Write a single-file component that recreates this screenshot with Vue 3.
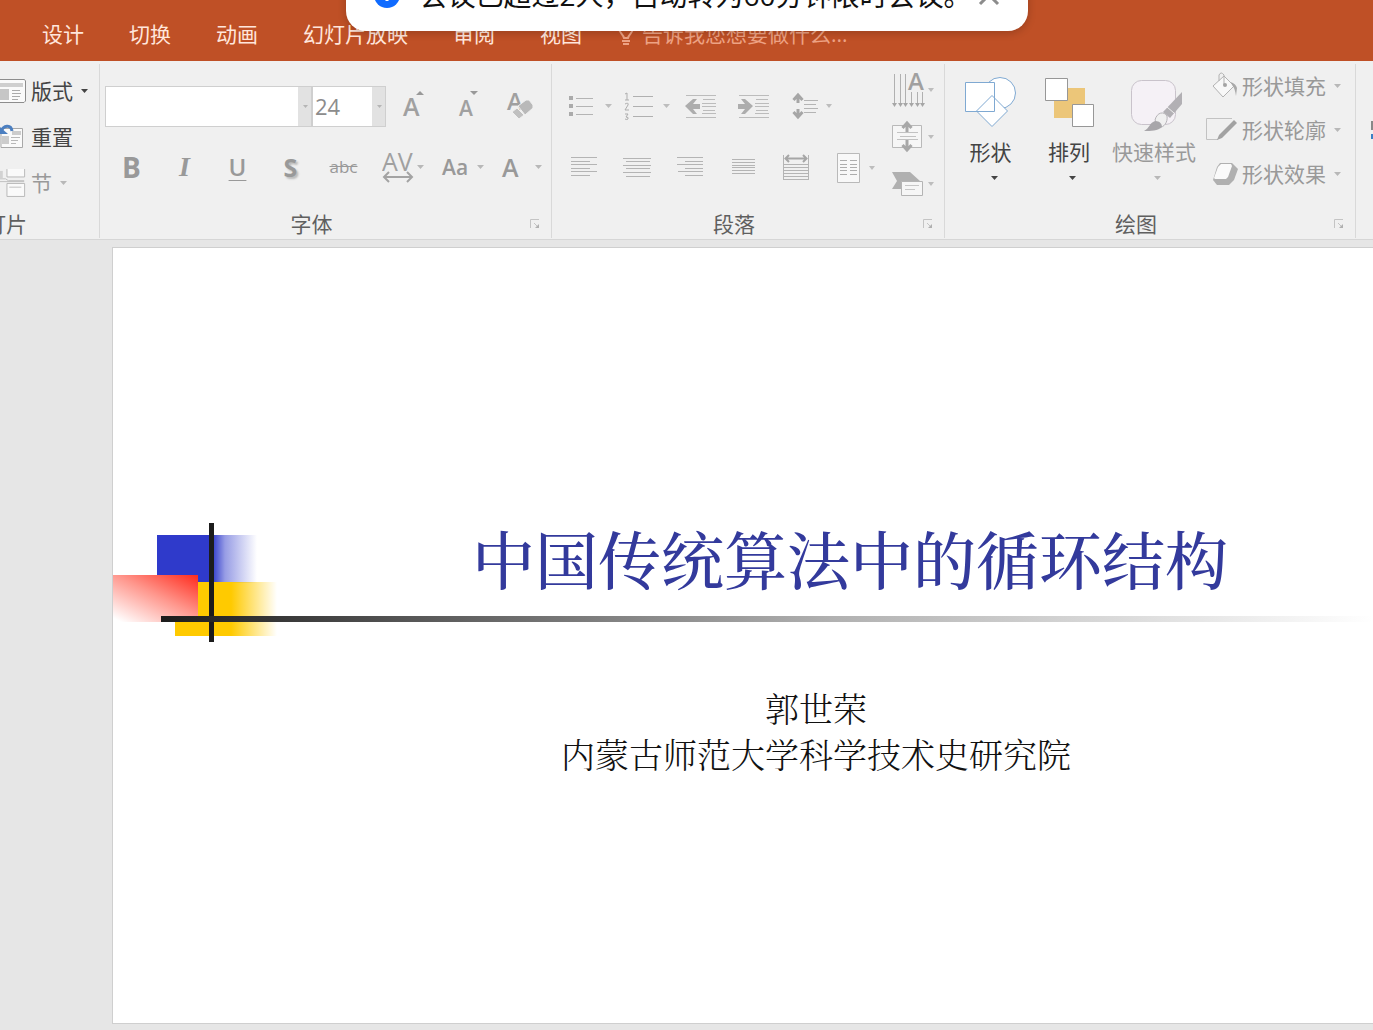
<script setup>
import { h, ref } from 'vue'

const tabs = ['设计', '切换', '动画', '幻灯片放映', '审阅', '视图']
const fontName = ref('')
const fontSize = ref('24')

const Caret = () =>
  h('svg', { class: 'caret', viewBox: '0 0 7 4', 'aria-hidden': 'true' }, [
    h('path', { d: 'M0 0h7L3.5 4z', fill: 'currentColor' })
  ])

const Launcher = () =>
  h('svg', { class: 'launcher-icon', viewBox: '0 0 10 10', 'aria-hidden': 'true' }, [
    h('path', { d: 'M.5 9V.5H9M4 4l4 4', fill: 'none', stroke: '#c4c4c4' }),
    h('path', { d: 'M9 5v4H5z', fill: '#b0b0b0' })
  ])
</script>

<template>
  <div class="app">
    <header class="tabbar">
      <nav class="tabs">
        <button v-for="t in tabs" :key="t" class="tab">{{ t }}</button>
      </nav>
      <button class="tell">
        <svg width="18" height="26" viewBox="0 0 18 26" fill="none" stroke="currentColor" stroke-width="2">
          <path d="M2 7a7 6 0 0 1 14 0c0 5-4 6-5 10H7C6 13 2 12 2 7z" />
          <path d="M5 20h8M6 23h6" />
        </svg>
        <span>告诉我您想要做什么...</span>
      </button>
    </header>

    <div class="toast" role="status">
      <svg width="26" height="26" viewBox="0 0 26 26">
        <circle cx="13" cy="13" r="13" fill="#0f6bff" />
        <path d="M13 5v3M13 11v8" stroke="#fff" stroke-width="3" />
      </svg>
      <span class="toast-text">会议已超过2人，自动转为60分钟限时会议。</span>
      <button class="close" aria-label="关闭">
        <svg width="24" height="24" viewBox="0 0 24 24"><path d="M3 3l18 18M21 3L3 21" stroke="#8c8c8c" stroke-width="3" /></svg>
      </button>
    </div>

    <section class="ribbon">
      <div class="group slides">
        <div class="body stack">
          <button class="item dark">
            <svg width="26" height="26" viewBox="0 0 26 26">
              <path d="M-6 1.500H24.500L25.500 3V23L24 24.500H-6z" fill="#fafafa" stroke="#8d8d8d" />
              <path d="M-1 5h24v4H-1z" fill="#cfcfcf" />
              <path d="M-1 11H9v11H-1z" fill="#c6c6c6" />
              <path d="M12 12.500h8M12 15.500h9M12 18.500h8M12 21.500h6" stroke="#ababab" />
            </svg>
            <span>版式</span><Caret />
          </button>
          <button class="item dark">
            <svg width="26" height="26" viewBox="0 0 26 26">
              <path d="M1 4.500H22.500V23.500H1z" fill="#fafafa" stroke="#a8a8a8" />
              <path d="M12 7h9v4h-9zM2 12h7v8H2z" fill="#cccccc" />
              <path d="M11 13.500h9M11 16.500h7M11 19.500h5" stroke="#b8b8b8" />
              <path d="M1 8C3 1 11 0 12 7" fill="none" stroke="#4c7fc0" stroke-width="3" />
              <path d="M0 3v7h8z" fill="#4c7fc0" />
            </svg>
            <span>重置</span>
          </button>
          <button class="item dim">
            <svg width="28" height="32" viewBox="0 0 28 32">
              <path d="M7.500 1V9.500H26.500V1M7.500 16.500H26.500V30.500H7.500z" fill="#fafafa" stroke="#b5b5b5" />
              <path d="M0 11.500H6L9 13.500H26M0 14.500H26M10 20.500H23" fill="none" stroke="#bdbdbd" />
              <path d="M0 3h3v8H0z" fill="#d2d2d2" />
            </svg>
            <span>节</span><Caret />
          </button>
        </div>
        <footer class="foot"><span>幻灯片</span></footer>
      </div>

      <div class="group font">
        <div class="body rows">
          <div class="row">
            <div class="combo name">
              <select v-model="fontName" aria-label="字体"><option value=""></option></select><Caret />
            </div>
            <div class="combo size">
              <select v-model="fontSize" aria-label="字号"><option>24</option></select><Caret />
            </div>
            <button class="tool" aria-label="增大字号">
              <svg width="32" height="32" viewBox="0 0 32 32">
                <text x="5" y="26" font-size="25" font-weight="600">A</text>
                <path d="M18 5l4-4 4 4z" fill="#999" />
              </svg>
            </button>
            <button class="tool" aria-label="减小字号">
              <svg width="32" height="32" viewBox="0 0 32 32">
                <text x="8" y="26" font-size="21" font-weight="600">A</text>
                <path d="M19 1h8l-4 4z" fill="#999" />
              </svg>
            </button>
            <button class="tool" aria-label="清除格式">
              <svg width="32" height="32" viewBox="0 0 32 32">
                <text x="3" y="20" font-size="24" font-weight="600">A</text>
                <path d="M14 16l8-6h3l4 5v3l-8 7z" fill="#b9b9b9" stroke="#f0f0f0" stroke-width="1" />
                <path d="M13 18l7 7-5 4-7-7z" fill="#c0c0c0" stroke="#f0f0f0" stroke-width="1" />
              </svg>
            </button>
          </div>
          <div class="row marks">
            <button class="tool bold">B</button>
            <button class="tool italic">I</button>
            <button class="tool under">U</button>
            <button class="tool shadow">S</button>
            <button class="tool strike">abc</button>
            <button class="tool drop first" aria-label="字符间距">
              <svg width="32" height="32" viewBox="0 0 32 32">
                <text x="0" y="20" font-size="25" font-weight="500">AV</text>
                <path d="M2 26h28M7 21l-5 5 5 5M25 21l5 5-5 5" fill="none" stroke="#a3a3a3" stroke-width="2" />
              </svg><Caret />
            </button>
            <button class="tool drop case"><span>Aa</span><Caret /></button>
            <button class="tool drop color"><span>A</span><Caret /></button>
          </div>
        </div>
        <footer class="foot"><span>字体</span><button class="launcher" aria-label="字体设置"><Launcher /></button></footer>
      </div>

      <div class="group para">
        <div class="body split">
          <div class="rows">
            <div class="row lists">
              <button class="tool wide" aria-label="项目符号">
                <svg width="48" height="32" viewBox="0 0 48 32">
                  <path d="M4 6h4v4H4zM4 14h4v4H4zM4 22h4v4H4z" fill="#ababab" />
                  <path d="M11 8.500h17M11 16.500h17M11 24.500h17" stroke="#b4b4b4" />
                  <path d="M40 14h7l-3.500 4z" fill="#bdbdbd" />
                </svg>
              </button>
              <button class="tool wide" aria-label="编号">
                <svg width="48" height="32" viewBox="0 0 48 32">
                  <path d="M3 4l2-1v7M3 10h4M3 14q4-2 3 1l-3 5h4M3 24h3l-2 3q3 0 2 2-1 1-3 0" fill="none" stroke="#adadad" />
                  <path d="M11 6.500h20M11 16.500h20M11 26.500h20" stroke="#b0b0b0" />
                  <path d="M41 14h7l-3.500 4z" fill="#bdbdbd" />
                </svg>
              </button>
              <button class="tool" aria-label="减少缩进">
                <svg width="32" height="32" viewBox="0 0 32 32">
                  <path d="M1 5.500h30M18 9.500h12M17 13.500h14M17 16.500h14M18 20.500h12M17 23.500h14M1 27.500h30" stroke="#bcbcbc" />
                  <path d="M0 16l8-7h4l-4 5h7v5H8l4 5H8z" fill="#adadad" />
                </svg>
              </button>
              <button class="tool" aria-label="增加缩进">
                <svg width="32" height="32" viewBox="0 0 32 32">
                  <path d="M1 5.500h30M18 9.500h12M17 13.500h14M17 16.500h14M18 20.500h12M17 23.500h14M1 27.500h30" stroke="#bcbcbc" />
                  <path d="M15 16L7 9H3l4 5H0v5h7l-4 5h4z" fill="#adadad" />
                </svg>
              </button>
              <button class="tool spacing" aria-label="行距">
                <svg width="44" height="32" viewBox="0 0 44 32">
                  <path d="M7 6v7M7 19v7M2.500 10L7 5l4.500 5M2.500 22L7 27l4.500-5" fill="none" stroke="#a6a6a6" stroke-width="3" />
                  <path d="M13 10.500h14M13 14.500h12M13 18.500h14M13 22.500h12" stroke="#b4b4b4" />
                  <path d="M35 14h6l-3 4z" fill="#bdbdbd" />
                </svg>
              </button>
            </div>
            <div class="row aligns">
              <button class="tool" aria-label="左对齐">
                <svg width="32" height="24" viewBox="0 0 32 24"><path d="M3 2.500h26M3 6.500h19M3 9.500h26M3 13.500h19M3 16.500h26M3 20.500h19" stroke="#b4b4b4" /></svg>
              </button>
              <button class="tool" aria-label="居中">
                <svg width="32" height="24" viewBox="0 0 32 24"><path d="M2 3.500h28M5 6.500h24M2 10.500h28M5 13.500h24M2 17.500h28M5 21.500h24" stroke="#b4b4b4" /></svg>
              </button>
              <button class="tool" aria-label="右对齐">
                <svg width="32" height="24" viewBox="0 0 32 24"><path d="M3 2.500h26M11 6.500h18M3 9.500h26M11 13.500h18M4 16.500h25M11 20.500h18" stroke="#b4b4b4" /></svg>
              </button>
              <button class="tool" aria-label="两端对齐">
                <svg width="32" height="24" viewBox="0 0 32 24"><path d="M5 4.500h23M5 7.500h23M5 10.500h23M5 12.500h23M5 15.500h23M5 18.500h23" stroke="#b4b4b4" /></svg>
              </button>
              <button class="tool" aria-label="分散对齐">
                <svg width="32" height="32" viewBox="0 0 32 32">
                  <path d="M3.500 4v25M28.500 4v25" stroke="#b4b4b4" />
                  <path d="M5 7.500h22M9 4L5.500 7.500 9 11M23 4l3.500 3.500L23 11" fill="none" stroke="#a6a6a6" stroke-width="2" />
                  <path d="M4 13.500h24M4 16.500h24M4 19.500h24M4 22.500h24M4 25.500h24M4 28.500h24" stroke="#b4b4b4" />
                </svg>
              </button>
              <button class="tool cols" aria-label="分栏">
                <svg width="40" height="32" viewBox="0 0 40 32">
                  <path d="M2.500 2.500h22v29h-22z" fill="#f8f8f8" stroke="#b9b9b9" />
                  <path d="M5 9.500h7M5 13.500h7M5 16.500h7M5 19.500h7M5 23.500h7M15 9.500h7M15 13.500h7M15 16.500h7M15 19.500h7M15 23.500h7" stroke="#adadad" />
                  <path d="M34 15h6l-3 4z" fill="#bdbdbd" />
                </svg>
              </button>
            </div>
          </div>
          <div class="stack textdir">
            <button class="item" aria-label="文字方向">
              <svg width="44" height="36" viewBox="0 0 44 36">
                <text x="16" y="17" font-size="24" font-weight="600">A</text>
                <path d="M2.500 1v32M8.500 1v32M13.500 1v32M19.500 19v13M25.500 19v13M30.500 19v13" stroke="#b0b0b0" />
                <path d="M0 30h5l-2.500 4zM6 30h5l-2.500 4zM11 30h5l-2.500 4zM17 30h5l-2.500 4zM23 30h5l-2.500 4zM28 30h5l-2.500 4z" fill="#a6a6a6" />
                <path d="M36 15h6l-3 4z" fill="#bdbdbd" />
              </svg>
            </button>
            <button class="item" aria-label="对齐文本">
              <svg width="44" height="36" viewBox="0 0 44 36">
                <path d="M.5 6.500h29v22h-29z" fill="#f6f6f6" stroke="#b9b9b9" />
                <path d="M5 13.500h21M8 17.500h16M5 20.500h21" stroke="#c2c2c2" />
                <path d="M15 4v9M15 21v10M10.500 9L15 4l4.500 5M10.500 26l4.500 5 4.500-5" fill="none" stroke="#a8a8a8" stroke-width="3" />
                <path d="M36 16h6l-3 4z" fill="#bdbdbd" />
              </svg>
            </button>
            <button class="item" aria-label="转换为 SmartArt">
              <svg width="44" height="36" viewBox="0 0 44 36">
                <path d="M0 7h18l10 9H10v8H0l5-8z" fill="#b0b0b0" />
                <path d="M9.500 16.500h21v14h-21z" fill="#f6f6f6" stroke="#b4b4b4" />
                <path d="M13 20.500h14M13 24.500h10" stroke="#c6c6c6" />
                <path d="M36 17h6l-3 4z" fill="#bdbdbd" />
              </svg>
            </button>
          </div>
        </div>
        <footer class="foot"><span>段落</span><button class="launcher" aria-label="段落设置"><Launcher /></button></footer>
      </div>

      <div class="group draw">
        <div class="body split">
          <button class="big shapes dark">
            <svg width="52" height="52" viewBox="0 0 52 52" fill="#fff" stroke="#7fa9d2">
              <circle cx="35" cy="16" r="15.500" />
              <path d="M.5 5.500h29v29H.5zM27 18.500L42.500 34 27 49.500 11.500 34z" />
            </svg>
            <span>形状</span><Caret />
          </button>
          <button class="big arrange dark">
            <svg width="52" height="52" viewBox="0 0 52 52">
              <path d="M11 11h31v30H11z" fill="#ecc679" />
              <path d="M2.500 1.500h22v22h-22zM29.500 27.500h21v22h-21z" fill="#fff" stroke="#979797" />
            </svg>
            <span>排列</span><Caret />
          </button>
          <button class="big quick dim">
            <svg width="56" height="56" viewBox="0 0 56 56">
              <rect x="5.500" y="3.500" width="44" height="44" rx="10" fill="#f5f1f6" stroke="#c9c3cb" />
              <path d="M56 15v12L44 41l-7-6z" fill="#b2b0b4" />
              <path d="M41 30l7 6" stroke="#f0f0f0" stroke-width="1" />
              <path d="M29 43c2-8 9-9 12-4 1 6-3 12-8 11z" fill="#f0f0f0" stroke="#b6b4b8" />
              <path d="M18 54c6-3 5-8 11-10 5 0 7 3 7 6-4 4-11 4-18 4z" fill="#a8a6aa" />
            </svg>
            <span>快速样式</span><Caret />
          </button>
          <div class="stack effects">
            <button class="item dim">
              <svg width="34" height="30" viewBox="0 0 34 30">
                <path d="M7 15L18 5l10 10-11 11z" fill="#f8f8f8" stroke="#b2b2b2" />
                <path d="M13 10V4q2-4 5 0v10" fill="none" stroke="#b2b2b2" />
                <circle cx="19" cy="14" r="2" fill="#a4a4a4" />
                <path d="M25 11q5 2 6 6l-1 8q-1-8-4-11z" fill="#a8a8a8" />
              </svg>
              <span>形状填充</span><Caret />
            </button>
            <button class="item dim">
              <svg width="34" height="30" viewBox="0 0 34 30">
                <path d="M26 3.500H.5v21H12" fill="none" stroke="#c2c2c2" />
                <path d="M11 25l2-5L28 5l3 3-15 15z" fill="#a2a2a2" />
              </svg>
              <span>形状轮廓</span><Caret />
            </button>
            <button class="item dim">
              <svg width="34" height="30" viewBox="0 0 34 30">
                <path d="M7 21l4-13 3-4h12l6 6-4 11-5 5H11z" fill="#b0b0b0" />
                <path d="M8 19l4-11 3-3h10l1 2-4 11-2 2H9z" fill="#fafafa" />
              </svg>
              <span>形状效果</span><Caret />
            </button>
          </div>
        </div>
        <footer class="foot"><span>绘图</span><button class="launcher" aria-label="形状格式设置"><Launcher /></button></footer>
      </div>

      <div class="group edit">
        <svg width="2" height="20" viewBox="0 0 2 20"><path d="M0 1h2v9H0z" fill="#888" /><path d="M0 14h2v5H0z" fill="#3c7fc4" /></svg>
      </div>
    </section>

    <main class="workspace">
      <article class="slide">
        <svg class="art" width="170" height="122" viewBox="0 0 170 122" aria-hidden="true">
          <defs>
            <linearGradient id="blue"><stop offset=".55" stop-color="#2f3acb" /><stop offset=".68" stop-color="#2f3acb" stop-opacity=".5" /><stop offset="1" stop-color="#2f3acb" stop-opacity="0" /></linearGradient>
            <linearGradient id="gold"><stop offset=".55" stop-color="#ffca00" /><stop offset="1" stop-color="#ffca00" stop-opacity="0" /></linearGradient>
            <linearGradient id="red" gradientUnits="userSpaceOnUse" x1="85" y1="52" x2="49" y2="124"><stop offset="0" stop-color="#ff2a1c" /><stop offset=".45" stop-color="#ff968c" /><stop offset=".95" stop-color="#fff" /></linearGradient>
          </defs>
          <path d="M44 12h100v48H44z" fill="url(#blue)" />
          <path d="M62 59h102v54H62z" fill="url(#gold)" />
          <path d="M0 52h85v47H0z" fill="url(#red)" />
          <path d="M96 0h5v119h-5z" fill="#1c1c1c" />
        </svg>
        <h1>中国传统算法中的循环结构</h1>
        <div class="rule"></div>
        <p class="byline">郭世荣<br />内蒙古师范大学科学技术史研究院</p>
      </article>
    </main>
  </div>
</template>

<style>
body {
  margin: 0;
  overflow: hidden;
}
</style>

<style scoped>
.app {
  position: relative;
  display: flex;
  flex-direction: column;
  min-height: 100vh;
  overflow: hidden;
  background: #e6e6e6;
  font-family: "Open Sans", "Noto Sans CJK SC", sans-serif;
  font-size: 21px;
  line-height: 24px;
}
button {
  padding: 0;
  border: 0;
  background: none;
  color: inherit;
  font: inherit;
  white-space: nowrap;
}
svg {
  display: block;
  flex: none;
}
svg text {
  fill: #a0a0a0;
}
.caret {
  width: 7px;
  height: 4px;
}

.tabbar {
  display: flex;
  align-items: center;
  gap: 35px;
  height: 54px;
  padding: 7px 0 0 42px;
  background: #bf5026;
  color: #ffe6dc;
}
.tabs {
  display: flex;
  gap: 45px;
}
.tell {
  display: flex;
  align-items: center;
  gap: 7px;
  color: #eda284;
}

.toast {
  position: absolute;
  top: -42px;
  left: 50%;
  z-index: 2;
  box-sizing: border-box;
  display: flex;
  align-items: center;
  width: 682px;
  height: 73px;
  padding: 0 27px 0 28px;
  border-radius: 20px;
  background: #fff;
  box-shadow: 0 2px 8px rgba(0, 0, 0, 0.2);
  transform: translateX(-50%);
}
.toast-text {
  flex: 1;
  margin-left: 20px;
  color: #111;
  font-size: 28px;
  white-space: nowrap;
}

.ribbon {
  display: flex;
  height: 178px;
  border-bottom: 1px solid #d6d6d6;
  background: #f0f0f0;
}
.group {
  position: relative;
  display: flex;
  flex: none;
  flex-direction: column;
  box-sizing: border-box;
  height: 174px;
  margin-top: 3px;
  border-right: 1px solid #d9d9d9;
}
.slides { width: 100px; }
.font { width: 452px; }
.para { width: 393px; }
.draw { width: 411px; }
.edit {
  flex: 1;
  align-items: flex-end;
  justify-content: center;
  padding-bottom: 42px;
  border: 0;
}
.body {
  height: 147px;
}
.foot {
  display: flex;
  align-items: center;
  height: 28px;
  color: #5f5f5f;
}
.foot span {
  flex: 1;
  text-align: center;
}
.slides .foot {
  justify-content: flex-end;
  padding-right: 72px;
  overflow: hidden;
}
.slides .foot span {
  flex: none;
}
.launcher {
  width: 28px;
  padding-left: 7px;
}
.launcher-icon {
  width: 10px;
  height: 10px;
}

.stack {
  box-sizing: border-box;
  padding-top: 4px;
}
.item {
  display: flex;
  align-items: center;
  height: 46px;
}
.dark { color: #444; }
.dim { color: #999; }
.slides .item svg:first-child {
  width: 26px;
  margin-right: 5px;
}
.slides .caret {
  margin-left: 8px;
}

.rows {
  display: flex;
  flex-direction: column;
  gap: 21px;
  box-sizing: border-box;
  padding-top: 22px;
}
.row {
  display: flex;
  align-items: center;
  height: 40px;
}
.font .row { padding-left: 5px; }
.tool {
  display: flex;
  flex: none;
  align-items: center;
  justify-content: center;
  width: 53px;
  height: 40px;
  color: #999;
}
.combo {
  position: relative;
  box-sizing: border-box;
  height: 41px;
}
.combo.name { width: 207px; }
.combo.size {
  width: 74px;
  margin-right: 1px;
}
.combo select {
  box-sizing: border-box;
  width: 100%;
  height: 100%;
  padding: 0 2px;
  appearance: none;
  border: 1px solid #cfcfcf;
  border-radius: 0;
  background: linear-gradient(#e2e2e2, #e2e2e2) right / 13px 100% no-repeat #fff;
  color: #8c8c8c;
  font: 22px "Open Sans", sans-serif;
}
.combo .caret {
  position: absolute;
  top: 19px;
  right: 4px;
  width: 5px;
  height: 3px;
  color: #b5b5b5;
}
.marks { line-height: 20px; }
.bold { font-size: 28px; font-weight: 700; }
.italic { font: italic bold 28px "Liberation Serif", serif; }
.under { font-size: 24px; font-weight: 600; text-decoration: underline 1px; text-underline-offset: 4px; }
.shadow { font-size: 25px; font-weight: 700; text-shadow: 2px 2px 2px #bbb; }
.strike { font-size: 17px; text-decoration: line-through; }
.drop {
  justify-content: space-between;
  box-sizing: border-box;
  width: 60px;
  padding: 0 13px 0 5px;
}
.drop .caret { color: #b8b8b8; }
.first { margin-left: 7px; }
.case { font-weight: 600; }
.color {
  width: 54px;
  padding-right: 9px;
  font-size: 25px;
  font-weight: 600;
}

.split {
  display: flex;
}
.lists { padding-left: 8px; }
.aligns { padding-left: 5px; }
.wide { width: 57px; }
.spacing { margin-left: 6px; }
.aligns .cols { margin-left: 6px; }
.textdir {
  margin-left: auto;
  padding-right: 8px;
}

.draw .body {
  padding-left: 8px;
}
.big {
  display: flex;
  flex-direction: column;
  align-items: center;
  padding-top: 13px;
}
.big span {
  margin: 11px 0 12px;
}
.big .caret {
  margin-left: 7px;
}
.shapes { width: 75px; }
.arrange { width: 82px; }
.quick { width: 88px; }
.quick span { margin-top: 7px; }
.effects {
  padding: 0 0 0 8px;
}
.effects .item {
  height: 44px;
}
.effects span {
  margin: 0 8px 0 2px;
}
.dim .caret { color: #b8b8b8; }

.workspace {
  display: flex;
  flex: 1;
  padding: 7px 0 6px 112px;
}
.slide {
  position: relative;
  flex: 1;
  border: 1px solid #cfcfcf;
  border-right: 0;
  background: #fff;
  font-family: SimSun, "Noto Serif CJK SC", "Noto Sans CJK SC", serif;
}
.art {
  position: absolute;
  top: 275px;
  left: 0;
}
h1 {
  position: relative;
  margin: 271px 0 21px;
  padding-left: 214px;
  color: #333a9c;
  font-size: 63px;
  font-weight: 500;
  line-height: 76px;
  text-align: center;
  white-space: nowrap;
}
.rule {
  position: relative;
  height: 6px;
  margin-left: 48px;
  background: linear-gradient(90deg, #1c1c1c, #555 20%, #b0b0b0 55%, #fff);
}
.byline {
  margin: 63px 0 0;
  padding-left: 146px;
  color: #111;
  font-size: 34px;
  font-weight: 300;
  line-height: 46px;
  text-align: center;
}
</style>
